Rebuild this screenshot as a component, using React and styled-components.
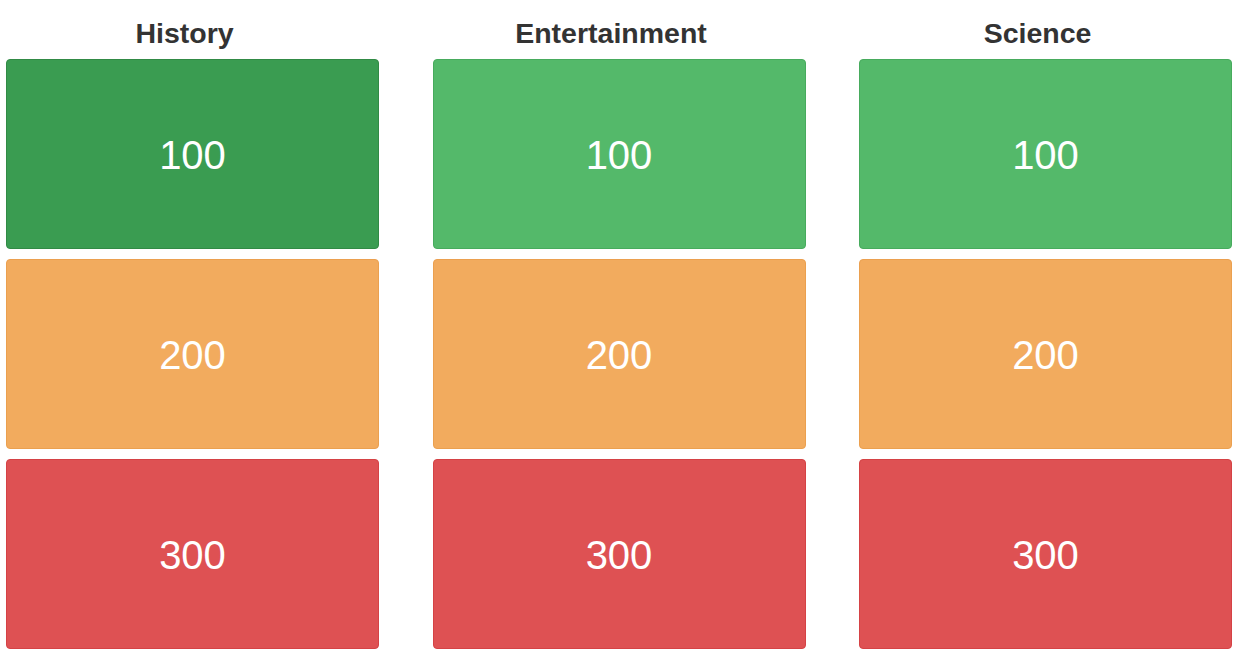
import React from "react";
import styled, { createGlobalStyle } from "styled-components";

const Global = createGlobalStyle`
  html, body { margin: 0; padding: 0; background: #fff; }
  body { font-family: "Liberation Sans", Arial, sans-serif; }
`;

const Board = styled.div`
  display: grid;
  grid-template-columns: repeat(3, 373px);
  column-gap: 53.5px;
  padding: 17px 0 0 6px;
`;

const Column = styled.div`
  display: flex;
  flex-direction: column;
  gap: 10px;
`;

const Heading = styled.h3`
  margin: 0;
  padding-right: 16px;
  height: 32px;
  line-height: 32px;
  font-size: 28.5px;
  font-weight: 700;
  color: #333;
  text-align: center;
`;

const palette = {
  active: { bg: "#3a9c51", border: "#318a45" },
  success: { bg: "#54b96a", border: "#47ab5d" },
  warning: { bg: "#f2ab5e", border: "#eba04f" },
  danger: { bg: "#de5153", border: "#d54245" },
};

const Tile = styled.button`
  box-sizing: border-box;
  height: 190px;
  width: 100%;
  display: flex;
  align-items: center;
  justify-content: center;
  padding: 2px 0 0 0;
  border: 1px solid ${(p) => palette[p.$kind].border};
  border-radius: 4px;
  background: ${(p) => palette[p.$kind].bg};
  color: #fff;
  font-family: "Liberation Sans", Arial, sans-serif;
  font-size: 40px;
  font-weight: 400;
  cursor: pointer;
`;

const categories = ["History", "Entertainment", "Science"];
const rows = [
  { value: 100, kind: "success" },
  { value: 200, kind: "warning" },
  { value: 300, kind: "danger" },
];

export default function App() {
  return (
    <>
      <Global />
      <Board>
        {categories.map((cat, ci) => (
          <Column key={cat}>
            <Heading>{cat}</Heading>
            {rows.map((r, ri) => (
              <Tile
                key={r.value}
                $kind={ci === 0 && ri === 0 ? "active" : r.kind}
              >
                {r.value}
              </Tile>
            ))}
          </Column>
        ))}
      </Board>
    </>
  );
}
